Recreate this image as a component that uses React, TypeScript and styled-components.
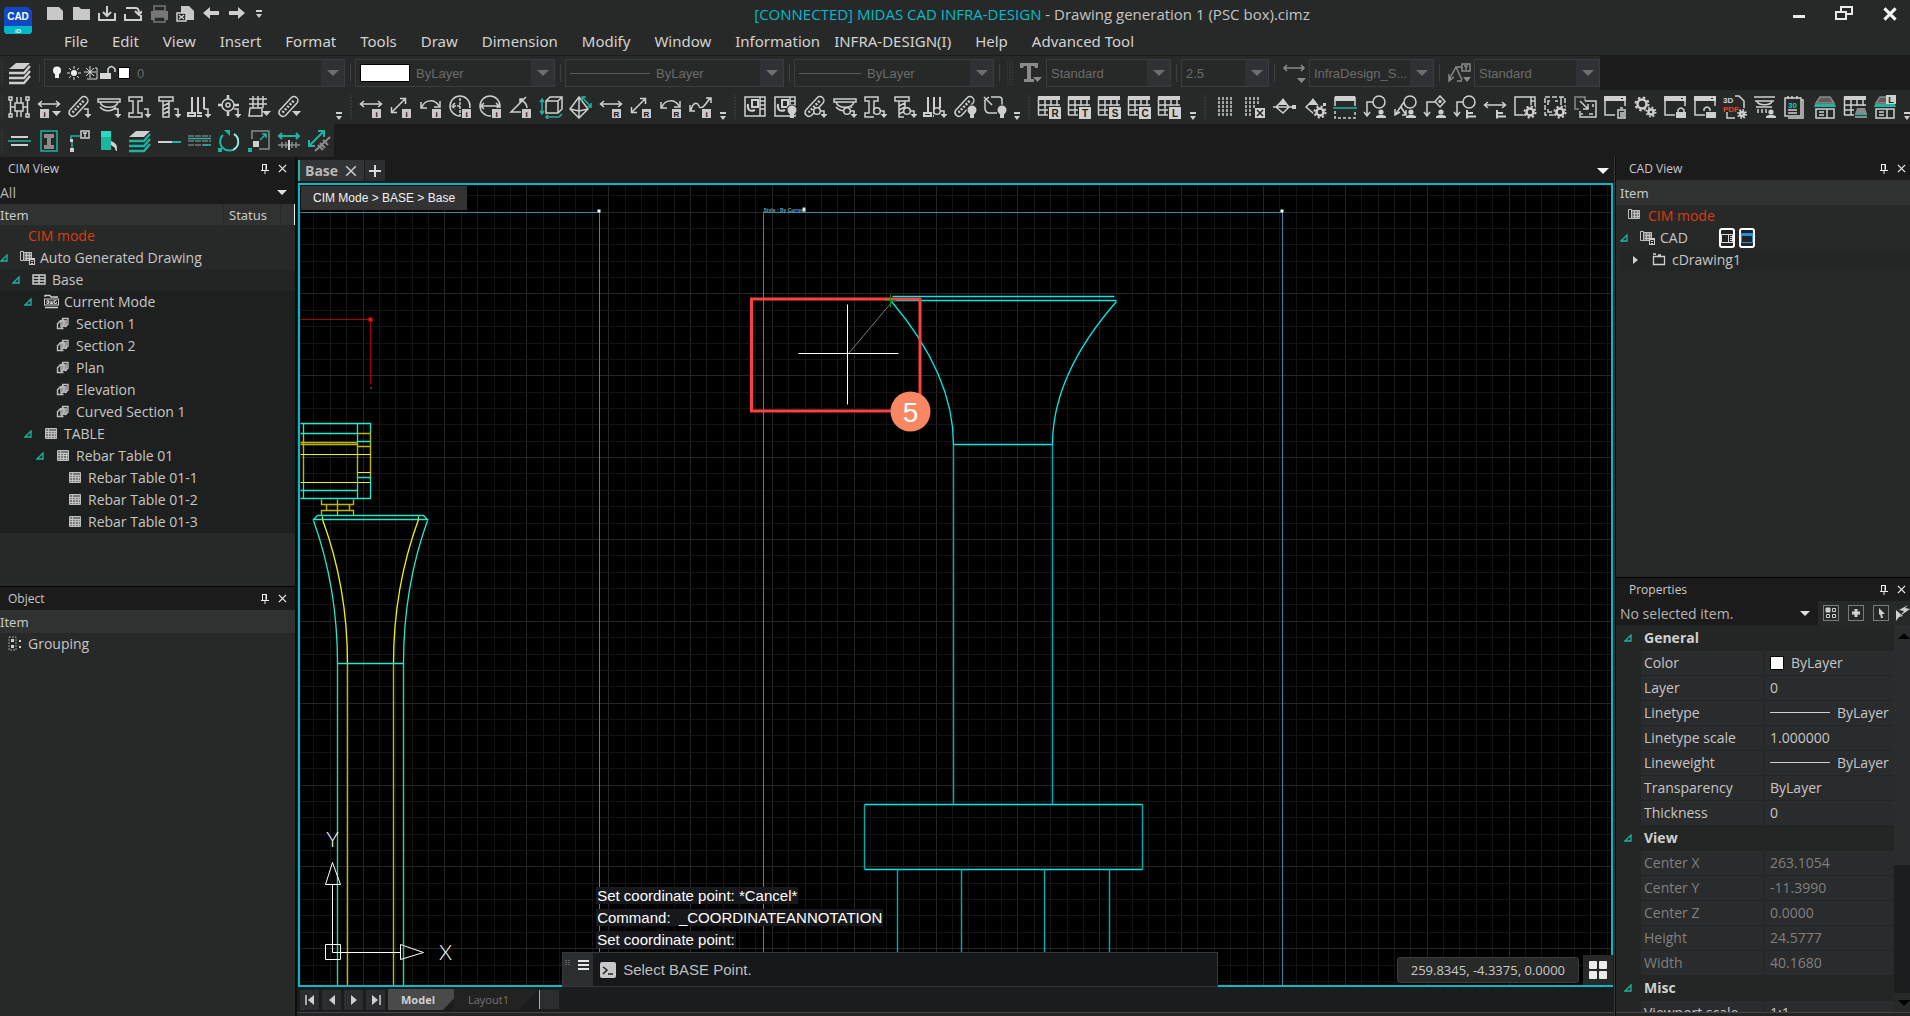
import React, { ReactNode } from "react";
import styled, { createGlobalStyle } from "styled-components";

const ui = '"Open Sans", "Noto Sans", sans-serif';
const serifI = '"Noto Sans", "Open Sans", sans-serif';
const arial = '"Liberation Sans", Arial, sans-serif';
const cyan = "#00bccb";
const teal = "#1db5a0";
const ink = "#cfcfcf";
const bar = "#272928";

const Global = createGlobalStyle`
  * { box-sizing: border-box; }
  body { margin: 0; background: #1b1b1b; color: #c8c8c8; font-family: ${ui}; font-size: 14px; overflow: hidden; }
  button, select, input { font: inherit; color: inherit; margin: 0; }
`;

/* ------------------------------------------------------------------ */
/* Layout                                                             */
/* ------------------------------------------------------------------ */

const Shell = styled.div`
  display: flex;
  flex-direction: column;
  height: 100vh;
  background: #1b1b1b;
`;

const Header = styled.header`
  display: grid;
  grid-template-columns: 40px 1fr;
  grid-template-rows: 27px 28px;
  background: ${bar};
  border-bottom: 1px solid #1c1c1c;
`;
const LogoCell = styled.div`
  grid-row: 1 / 3;
  padding: 7px 0 0 4px;
`;
const TitleRow = styled.div`
  display: flex;
  align-items: center;
`;
const QuickBar = styled.div`
  display: flex;
  align-items: center;
  padding-left: 2px;
`;
const Title = styled.h1`
  flex: 1;
  margin: 0;
  padding-left: 16px;
  text-align: center;
  font-weight: 400;
  font-size: 15px;
  line-height: 22px;
  color: #c4c4c4;
  white-space: nowrap;
  span { color: ${cyan}; }
`;
const WindowButtons = styled.div`
  display: flex;
`;
const Menu = styled.nav`
  display: flex;
  align-items: center;
  gap: 24px;
  padding-left: 24px;
  font-family: ${serifI};
`;
const MenuItem = styled.button<{ $tight?: boolean }>`
  border: 0;
  padding: 0;
  margin-left: ${(p) => (p.$tight ? -10 : 0)}px;
  background: none;
  font-size: 15px;
  line-height: 22px;
  color: #d2d2d2;
  white-space: nowrap;
`;
const IconButton = styled.button<{ $w?: number; $h?: number }>`
  display: flex;
  flex: none;
  align-items: center;
  justify-content: center;
  width: ${(p) => p.$w ?? 30}px;
  height: ${(p) => p.$h ?? 24}px;
  border: 0;
  padding: 0;
  background: none;
`;

const ToolRow = styled.div<{ $h: number; $fit?: boolean }>`
  display: flex;
  flex: none;
  align-items: center;
  height: ${(p) => p.$h}px;
  width: ${(p) => (p.$fit ? "max-content" : "auto")};
  background: ${bar};
  overflow: hidden;
`;
const ToolGroup = styled.div<{ $stretch?: number }>`
  display: flex;
  align-items: center;
  flex: none;
  min-width: ${(p) => p.$stretch ?? 0}px;
`;
const Grip = styled.i<{ $w?: number }>`
  flex: none;
  width: ${(p) => p.$w ?? 10}px;
  height: 24px;
  background: radial-gradient(circle, #5a5a5a 1px, transparent 1px) center / 3px 3px;
  background-clip: content-box;
  padding: 0 ${(p) => (p.$w === 4 ? 1 : 3)}px;
`;
const More = styled.button`
  display: flex;
  flex: none;
  align-items: flex-end;
  justify-content: center;
  width: 14px;
  height: 26px;
  margin-left: auto;
  border: 0;
  padding: 0;
  background: none;
`;
const Divider = styled.i`
  flex: none;
  width: 1px;
  height: 18px;
  margin: 0 4px 0 5px;
  background: #3e3f41;
`;

const ComboBox = styled.label<{ $w: number }>`
  display: flex;
  flex: none;
  align-items: center;
  width: ${(p) => p.$w}px;
  height: 28px;
  border: 1px solid #3c3c40;
  padding-left: 4px;
  color: #6b6b6b;
  font-family: ${arial};
`;
const ComboLead = styled.span`
  display: flex;
  flex: none;
  margin-right: 6px;
`;
const ComboSelect = styled.select`
  flex: 1;
  min-width: 0;
  height: 24px;
  appearance: none;
  border: 0;
  padding: 0;
  background: transparent;
  font-size: 13px;
`;
const ComboArrow = styled.span`
  display: flex;
  flex: none;
  align-items: center;
  justify-content: center;
  width: 23px;
  height: 26px;
  background: #303134;
`;
const Swatch = styled.i<{ $w: number; $h: number }>`
  flex: none;
  width: ${(p) => p.$w}px;
  height: ${(p) => p.$h}px;
  border: 1px solid #000;
  background: #fff;
`;
const Rule = styled.i<{ $w: number; $c: string }>`
  flex: none;
  width: ${(p) => p.$w}px;
  height: 1px;
  background: ${(p) => p.$c};
`;

const Body = styled.main`
  display: grid;
  grid-template-columns: 297px minmax(0, 1fr) 295px;
  flex: 1;
  min-height: 0;
`;
const Side = styled.aside<{ $right?: boolean }>`
  display: flex;
  flex-direction: column;
  min-height: 0;
  border-right: ${(p) => (p.$right ? "0" : "2px solid #0d0d0d")};
  border-left: ${(p) => (p.$right ? "1px solid #0d0d0d" : "0")};
  background: ${bar};
`;
const Panel = styled.section<{ $grow: number; $line?: boolean }>`
  display: flex;
  flex-direction: column;
  flex: ${(p) => p.$grow} 1 0;
  min-height: 0;
  overflow: hidden;
  border-top: ${(p) => (p.$line ? "1px solid #000" : "0")};
`;
const PanelTitle = styled.div<{ $inset?: boolean }>`
  display: flex;
  flex: none;
  align-items: center;
  height: 23px;
  padding-left: ${(p) => (p.$inset ? 13 : 8)}px;
  padding-right: ${(p) => (p.$inset ? 0 : 4)}px;
  background: #1b1b1c;
  h2 { flex: 1; margin: 0; font-size: 12px; font-weight: 400; line-height: 18px; }
`;
const FilterRow = styled.label<{ $inset?: boolean }>`
  display: flex;
  flex: 1;
  align-items: center;
  height: 24px;
  padding-left: ${(p) => (p.$inset ? 4 : 0)}px;
  background: #1b1b1c;
`;
const FilterBar = styled.div`
  display: flex;
  flex: none;
  height: 24px;
`;
const PlainSelect = styled.select`
  flex: 1;
  height: 24px;
  appearance: none;
  border: 0;
  padding: 0;
  background: transparent;
  color: #b4b4b4;
`;
const ColumnHead = styled.div<{ $inset?: boolean; $h?: number }>`
  display: flex;
  flex: none;
  align-items: center;
  height: ${(p) => p.$h ?? 23}px;
  padding-left: ${(p) => (p.$inset ? 4 : 0)}px;
  background: #303231;
  font-family: ${serifI};
  font-size: 13px;
  line-height: 20px;
`;
const HeadItem = styled.span`
  flex: 1;
`;
const HeadStatus = styled.span`
  width: 58px;
  padding-left: 5px;
  border-left: 1px solid #272928;
  border-right: 1px solid #272928;
`;
const HeadEnd = styled.span`
  align-self: stretch;
  width: 14px;
  border-right: 1px solid #f0f0f0;
`;

const Tree = styled.ul<{ $pad?: number }>`
  flex: none;
  list-style: none;
  margin: 0;
  padding: 0 0 0 ${(p) => p.$pad ?? 0}px;
`;
const TreeRow = styled.li<{ $depth: number; $bg?: string; $warn?: boolean }>`
  display: flex;
  align-items: center;
  height: 22px;
  padding-left: ${(p) => p.$depth * 12}px;
  background: ${(p) => p.$bg ?? "transparent"};
  color: ${(p) => (p.$warn ? "#dd3a10" : "#c6c6c6")};
  line-height: 22px;
  white-space: nowrap;
`;
const Twist = styled.span<{ $w: number }>`
  display: flex;
  flex: none;
  width: ${(p) => p.$w}px;
`;
const TreeIcon = styled.span`
  display: flex;
  flex: none;
  width: 20px;
`;
const TreeActions = styled.span`
  display: flex;
  gap: 4px;
  margin-left: 31px;
`;
const TinyButton = styled.button`
  display: flex;
  align-items: center;
  justify-content: center;
  width: 16px;
  height: 20px;
  border: 2px solid #fff;
  border-radius: 3px;
  padding: 0;
  background: #222;
`;

const Center = styled.section`
  display: flex;
  flex-direction: column;
  min-width: 0;
  border-right: 1px solid #3a3a3a;
  background: #1b1b1b;
`;
const TabStrip = styled.div`
  display: flex;
  flex: none;
  align-items: center;
  gap: 1px;
  height: 26px;
  padding: 3px 4px 2px 1px;
`;
const FileTab = styled.div`
  display: flex;
  align-items: center;
  height: 21px;
  border-left: 2px solid ${teal};
  padding-left: 5px;
  background: #333435;
`;
const FileName = styled.button`
  border: 0;
  padding: 0;
  background: none;
  color: #b8b8b8;
  font-weight: 700;
  line-height: 20px;
`;
const AddTab = styled(IconButton)`
  background: #2c2d2e;
`;
const Spacer = styled.span`
  flex: 1;
`;

const Canvas = styled.div`
  position: relative;
  flex: 1;
  min-height: 0;
  margin: 0 1px;
  border: 2px solid ${cyan};
  background: #000;
`;
const Drawing = styled.svg`
  display: block;
  width: 100%;
  height: 100%;
`;
const Crumb = styled.div`
  position: absolute;
  top: 1px;
  left: 1px;
  padding: 0 12px;
  background: #333;
  color: #f2f2f2;
  font-family: ${arial};
  font-size: 12px;
  line-height: 24px;
`;
const Console = styled.div`
  position: absolute;
  left: 20%;
  bottom: -2px;
  width: 50%;
`;
const Log = styled.div`
  display: flex;
  flex-direction: column;
  align-items: flex-start;
  gap: 5px;
  padding: 0 0 4px 34px;
  font-family: ${arial};
`;
const LogLine = styled.p`
  margin: 0;
  padding: 0 1px;
  background: #17181b;
  color: #fff;
  font-size: 15px;
  line-height: 17px;
  white-space: pre;
`;
const Prompt = styled.label`
  display: flex;
  align-items: stretch;
  height: 35px;
  border: 1px solid #36373b;
  background: #17181a;
`;
const PromptSide = styled.span`
  display: flex;
  align-items: flex-start;
  gap: 8px;
  width: 30px;
  padding: 7px 0 0 2px;
  background: #2c2d31;
`;
const PromptIcon = styled.span`
  display: flex;
  align-items: center;
  padding: 0 7px;
`;
const PromptInput = styled.input`
  flex: 1;
  min-width: 0;
  border: 0;
  padding: 0;
  background: transparent;
  color: #bfbfbf;
  font-family: ${arial};
  font-size: 15px;
  outline: 0;
`;
const Readout = styled.div`
  position: absolute;
  right: -2px;
  bottom: 0;
  display: flex;
  align-items: center;
  gap: 4px;
`;
const Coords = styled.output`
  border: 1px solid #3b3c3c;
  border-radius: 3px;
  padding: 0 13px;
  background: ${bar};
  color: #c8c8c8;
  font-size: 13px;
  line-height: 24px;
`;
const GridToggle = styled(IconButton)`
  background: ${bar};
`;

const SheetBar = styled.div`
  display: flex;
  flex: none;
  align-items: center;
  gap: 3px;
  height: 25px;
  padding-left: 3px;
  background: #1b1c1e;
`;
const SheetNav = styled(IconButton)`
  background: #2c2d31;
`;
const Sheet = styled.button<{ $on?: boolean }>`
  height: 21px;
  border: 0;
  padding: 0 ${(p) => (p.$on ? 28 : 30)}px 0 ${(p) => (p.$on ? 13 : 14)}px;
  margin-right: ${(p) => (p.$on ? -12 : -3)}px;
  background: ${(p) => (p.$on ? "#4a4a4a" : "#222")};
  clip-path: polygon(0 0, 100% 0, calc(100% - 20px) 100%, 0 100%);
  color: ${(p) => (p.$on ? "#d0d0d0" : "#757575")};
  font-size: 11px;
  font-weight: ${(p) => (p.$on ? 700 : 400)};
  line-height: 20px;
`;
const SheetHandle = styled.i`
  width: 20px;
  height: 19px;
  border-left: 1px solid #aaa;
  background: #2c2d31;
`;
const Foot = styled.div`
  flex: none;
  height: 4px;
  border-top: 1px solid #454545;
  background: #242424;
`;

const PropBody = styled.div`
  display: flex;
  flex: 1;
  min-height: 0;
`;
const PropScroll = styled.div`
  flex: 1;
  min-width: 0;
  overflow: hidden;
`;
const PropTable = styled.table`
  width: 100%;
  table-layout: fixed;
  border-collapse: collapse;
  background: #242625;
  line-height: 22px;
`;
const PropGroup = styled.th`
  height: 25px;
  padding: 0 0 0 8px;
  text-align: left;
  color: #d0d0d0;
  span { display: flex; align-items: center; gap: 12px; }
`;
const PropName = styled.th<{ $dim?: boolean }>`
  height: 25px;
  padding: 0 0 0 3px;
  border-top: 1px solid #232524;
  background: #2a2b2c;
  color: ${(p) => (p.$dim ? "#808080" : "#c6c6c6")};
  font-weight: 400;
  text-align: left;
`;
const PropValue = styled.td<{ $dim?: boolean }>`
  height: 25px;
  padding: 0 0 0 5px;
  border-top: 1px solid #232524;
  border-left: 2px solid #262827;
  background: #2a2b2c;
  color: ${(p) => (p.$dim ? "#808080" : "#c6c6c6")};
  span { display: flex; align-items: center; gap: 7px; }
  white-space: nowrap;
`;
const Gutter = styled.td`
  padding: 0;
`;
const ScrollTrack = styled.div`
  display: flex;
  flex-direction: column;
  align-items: flex-end;
  justify-content: space-between;
  width: 16px;
  padding: 8px 0 6px;
  background: linear-gradient(#2b2c2d 62%, #1c1d1e 62%, #1c1d1e 95%, #272928 95%);
`;

/* ------------------------------------------------------------------ */
/* Icons                                                              */
/* ------------------------------------------------------------------ */

type IcProps = { children: ReactNode; s?: number; c?: string };
const Ic = ({ children, s = 24, c = ink }: IcProps) => (
  <svg width={s} height={s} viewBox={`0 0 ${s} ${s}`} fill="none" stroke={c} strokeWidth={1.5} aria-hidden="true">
    {children}
  </svg>
);

const Turn = () => (
  <g>
    <path d="M17 14h4v7" />
    <path d="M17.500 19h7L21 23z" fill={ink} stroke="none" />
  </g>
);
const Tri = () => <path d="M15 16h9l-4.500 5z" fill={ink} stroke="none" />;
const Badge = ({ t, x = 13 }: { t: string; x?: number }) => (
  <g stroke="none">
    <rect x={x - 1} y="13" width="11" height="11" fill={bar} />
    <rect x={x} y="14" width="9" height="9" fill="#c8c8c8" />
    <text x={x + 4.5} y="21.500" textAnchor="middle" fontFamily="Liberation Sans" fontWeight="700" fontSize="8" fill="#111">{t}</text>
  </g>
);
const Node = () => (
  <g>
    <path d="M11 13h13v11H11z" fill={bar} stroke="none" />
    <circle cx="14" cy="16" r="3.300" />
    <path d="M17 16h4v4" />
    <path d="M17.500 19h7L21 23z" fill={ink} stroke="none" />
  </g>
);
const Bulb = () => (
  <g stroke="none">
    <circle cx="19" cy="15" r="5.500" fill={bar} />
    <circle cx="19" cy="15" r="4.500" fill={ink} />
    <rect x="17" y="19" width="4" height="4" fill={ink} />
  </g>
);
const HArrow = () => <path d="M1 9H23M5 6L1.500 9 5 12M19 6l3.500 3L19 12" />;
const Diag = () => <path d="M3 17L16 4M11 3.500h5.500V9M2.500 12v5.500H8" />;
const Arc = () => <path d="M3 12C6 4 16 4 20 11M2 7v6h6M21 6v6h-6" />;
const Pill = () => (
  <g>
    <path d="M2.500 15.500L14 3a3.800 3.800 0 0 1 6 5L8.500 20.500A4 4 0 0 1 2.500 15.500z" />
    <path d="M5.500 17.500L17 5.500" strokeWidth="2.500" strokeDasharray="2 1.500" />
  </g>
);
const Beam = () => <path d="M1 4h22v3H1zM3 7c2 7 16 7 18 0M3 12c4 5 12 5 16 0" />;
const IBeam = () => <path d="M2 2h13v4h-4v12h4v4H2v-4h4V6H2z" />;
const Bolt = () => <path d="M2 2h14v4H2zM6 6v16h6V6M6 11l6-3M6 15l6-3M6 19l6-3" />;
const Rods = () => <path d="M5 2v16M11 2v16M17 2v12M1 18h7v3H1zM10 18h5M10 21h5" strokeWidth="2" />;
const Gear = ({ x = 17, y = 17, r = 4 }: { x?: number; y?: number; r?: number }) => (
  <g>
    <circle cx={x} cy={y} r={r + 3} fill={bar} stroke="none" />
    <circle cx={x} cy={y} r={r + 1.5} strokeWidth="2" strokeDasharray={`${(r + 1.5) * 0.393} ${(r + 1.5) * 0.393}`} />
    <circle cx={x} cy={y} r={r - 0.5} strokeWidth="2.500" />
  </g>
);
const Win = () => (
  <g>
    <path d="M2 2h20v18H2z" />
    <path d="M1 1h22v5H1z" fill={ink} stroke="none" />
    <path d="M18 3h2v1h-2z" fill="#222" stroke="none" />
    <rect x="12" y="11" width="12" height="13" fill={bar} stroke="none" />
  </g>
);
const Person = () => (
  <g stroke="none">
    <circle cx="18" cy="17" r="2.600" fill={ink} />
    <path d="M13 23v-1.500q1-1.500 3-1.500h4q2 0 3 1.500V23z" fill={ink} />
  </g>
);
const Align = () => <path d="M14 15v8.500M15 18h5M15 21.500h8" strokeWidth="2" />;
const GridT = () => (
  <g>
    <path d="M1.500 2v18M8 2v18M14 2v11M20 2v11M1 10h22M1 15h12M1 20h12" />
    <path d="M1 1h22v4H1z" fill={ink} stroke="none" />
  </g>
);
const House = () => (
  <g>
    <path d="M7 2h10l4 6H3z" fill="#5c5c5c" stroke="#8b8b8b" />
    <path d="M2 9h20l1 3H1z" fill={teal} stroke="none" />
    <path d="M3 14h18v9H3zM14 14v9M6 17h5M6 20h5" />
  </g>
);

const net = (
  <path d="M2 2h3v3H2zM19 2h3v3h-3zM2 19h3v3H2zM19 19h3v3h-3zM8 8h8v8H8zM3.500 5v14M20.500 5v14M3.500 12H8M16 12h4.500M10 2v6M14 2v6M10 16v6M14 16v6" />
);
const panelIcon = (
  <g>
    <path d="M2 2h20v19H2zM17 2v19M17 6h5M17 10h5M17 14h5" />
    <path d="M9 5h6v7H9zM5 9c-1 6 2 8 7 6" strokeWidth="2" />
  </g>
);

const groups: { w?: number; icons: [string, ReactNode][] }[] = [
  {
    w: 342,
    icons: [
      ["Network", net],
      ["Dimension info", <><HArrow /><Badge t="i" x={3} /><Tri /></>],
      ["Rebar", <><Pill /><Turn /></>],
      ["Girder", <><Beam /><Turn /></>],
      ["Section", <><IBeam /><Turn /></>],
      ["Pile", <><Bolt /><Turn /></>],
      ["Rods", <><Rods /><Turn /></>],
      ["Target", <><circle cx="11" cy="10" r="6" /><circle cx="11" cy="10" r="2" /><path d="M11 0v4M11 16v5M1 10h4M17 10h5" strokeWidth="2.500" /><Turn /></>],
      ["Mesh", <><path d="M6 1v12M11 1v12M16 1v12M2 4h18M2 9h18M3 13h12v8H2z" /><Tri /></>],
      ["Rebar list", <><Pill /><Tri /></>],
    ],
  },
  {
    icons: [
      ["Linear dimension", <><HArrow /><Badge t="i" /></>],
      ["Aligned dimension", <><Diag /><Badge t="i" /></>],
      ["Arc dimension", <><Arc /><Badge t="i" /></>],
      ["Radius", <><circle cx="11" cy="11" r="10" /><path d="M11 11H3M6 8l-3 3 3 3M11 3v17" strokeDasharray="3 1" /><Badge t="i" /></>],
      ["Diameter", <><circle cx="11" cy="11" r="10" /><path d="M2 11h18M5 8l-3 3 3 3M17 8l3 3-3 3" /><Badge t="i" /></>],
      ["Angle", <><path d="M17 2L2 17h12M12 5c4 2 6 5 6 8M14 4h-3v4" /><Badge t="i" /></>],
      ["Box dimension", <><path d="M7 6l4-4h12v12l-4 4H7zM7 6h12v12M19 6l4-4" /><path d="M3 5v13M1 7l2-3 2 3M1 16l2 3 2-3M7 22h13M9 20l-2 2 2 2M20 22l3-3" stroke={teal} /></>],
      ["Pyramid dimension", <><path d="M10 2L1 14l9 9 9-9zM10 2v21M1 14l9 2 9-2" /><path d="M13 2l9 10M13 6V2h4M22 8v4h-4" stroke={teal} /></>],
      ["Linear reference", <><HArrow /><Badge t="R" /></>],
      ["Aligned reference", <><Diag /><Badge t="R" /></>],
      ["Arc reference", <><Arc /><Badge t="R" /></>],
      ["Spline", <><path d="M2 15c2-8 6-8 8-4s5 1 11-8M17 3h5v5M1 10v6h5" /><Badge t="i" /></>],
    ],
  },
  {
    icons: [
      ["View panel", panelIcon],
      ["View panel tips", <>{panelIcon}<Bulb /></>],
      ["Rebar node", <><Pill /><Node /></>],
      ["Girder node", <><Beam /><Node /></>],
      ["Section node", <><IBeam /><Node /></>],
      ["Pile node", <><Bolt /><Node /></>],
      ["Rods node", <><Rods /><Node /></>],
      ["Rebar tips", <><Pill /><Bulb /></>],
      ["Shape tips", <><path d="M8 2h8q3 0 3 3v6M14 18H6q-3 0-4-4V6M1 2l8 8M1 6l5-4" /><Bulb /></>],
    ],
  },
  {
    w: 166,
    icons: ["R", "T", "S", "C", "L"].map((t): [string, ReactNode] => [
      `Table ${t}`,
      <><GridT /><rect x="11" y="11" width="13" height="13" fill={bar} stroke="none" /><rect x="12" y="12" width="12" height="12" fill={ink} stroke="none" /><text x="18" y="21.500" textAnchor="middle" fontFamily="Liberation Sans" fontWeight="700" fontSize="10" fill="#222" stroke="none">{t}</text></>,
    ]),
  },
  {
    icons: [
      ["Columns", <path d="M6 2v20M10 2v20M14 2v20M18 2v20" strokeDasharray="3 1" />],
      ["Columns off", <><path d="M3 2v20M7 2v20M11 2v11M15 2v8" strokeDasharray="3 1" /><rect x="12" y="13" width="10" height="10" fill={ink} stroke="none" /><path d="M14 15l6 6M20 15l-6 6" stroke="#222" /></>],
      ["Level mark", <><path d="M3 12l7-7 6 7-6 6zM0 12h23" /><path d="M5 10l5-7 5 7zM19 10h4v4h-4z" fill={ink} stroke="none" /></>],
      ["Level settings", <><path d="M3 12l7-7 6 7-6 6z" /><path d="M5 10l5-7 5 7zM20 8h3v3h-3z" fill={ink} stroke="none" /><Gear /></>],
      ["Split", <><path d="M2 1h20v5H2z" fill={ink} stroke="none" /><path d="M2 2v9M22 2v9" /><path d="M0 13h24" stroke={teal} /><path d="M2 16v7h20v-7" strokeDasharray="3 2" /></>],
      ["Leader user", <><circle cx="16" cy="7" r="6" /><path d="M10 7H4v13M1 17l3 4 3-4" /><Person /></>],
      ["Leader multi", <><circle cx="17" cy="7" r="6" /><path d="M11 7L2 20M2 14v6l5-3M8 12l5 8M9 20h4v-5" /><Person /></>],
      ["Leader diamond", <><path d="M17 1l5 5.500-5 5.500-5-5.500zM12 7H4v13M1 17l3 4 3-4" /><circle cx="17" cy="6.500" r="1" /><Person /></>],
      ["Leader align", <><circle cx="16" cy="7" r="6" /><path d="M10 7H4v13M1 17l3 4 3-4" /><Align /></>],
      ["Dimension align", <><path d="M2 10h20M5 7l-3.500 3L5 13M19 7l3.500 3L19 13" /><Align /></>],
      ["View settings", <><path d="M2 2h20v18H2zM18 2v8M18 6h4" /><Gear /></>],
      ["Frame settings", <><path d="M2 2h20v18H2z" strokeDasharray="5 2" /><path d="M18 2v8M7 6H5v4M5 14v3h4M12 6h3" /><Gear /></>],
      ["Scale view", <><path d="M12 6V2H2v12h4" stroke="#888" /><path d="M12 6h11v16H7v-6M7 6l8 8M15 9v5h-5M10 19H8M20 9v3M20 19h-4" /></>],
      ["Delete view", <><Win /><path d="M14 15h9M17 13h3M15 16v7h7v-7M18 17v5M20 17v5" /></>],
      ["System", <><Gear x={9} y={9} r={5} /><Gear x={18} y={17} r={3} /></>],
      ["Lock view", <><Win /><path d="M13 17h10v6H13z" fill={ink} stroke="none" /><path d="M15 17v-2q3-4 6 0v2" /></>],
      ["Unlock view", <><Win /><path d="M13 17h10v6H13z" fill={ink} stroke="none" /><path d="M11 16v-2q3-4 6 0v2" /></>],
      ["3D PDF", <><path d="M12 1h4l5 5v7M4 17v6h8" /><text x="0" y="8" fontFamily="Liberation Sans" fontWeight="700" fontSize="8" fill={ink} stroke="none">3D</text><text x="0" y="17" fontFamily="Liberation Sans" fontWeight="700" fontSize="8" fill="#f04428" stroke="none">PDF</text><Gear x={19} y={19} r={2.5} /></>],
      ["Deck", <><path d="M1 2h21M2 6h19M4 6c1 5 14 5 15 0M3 12h16M5 14v4M9 14v4M13 14v4" /><Person /></>],
      ["3D notes", <><path d="M2 3h16v18H2zM18 5h2v18H5M5 1v3M9 1v3M14 1v3M5 15h9M5 18h9" /><text x="5" y="13" fontFamily="Liberation Sans" fontWeight="700" fontSize="8" fill="#10d0b8" stroke="none">30</text></>],
      ["Bridge model", <House />],
      ["Bridge table", <><GridT /><rect x="11" y="11" width="13" height="13" fill={bar} stroke="none" /><path d="M14 13h8l2 6H12zM12 21h12v2H12z" fill="#8b8b8b" stroke="none" /><path d="M12 19.500h12" stroke={teal} /></>],
      ["Bridge layer", <><House /><rect x="13" y="0" width="10" height="9" fill={ink} stroke="none" /><text x="18" y="8" textAnchor="middle" fontFamily="Liberation Sans" fontWeight="700" fontSize="9" fill="#222" stroke="none">L</text></>],
    ],
  },
];

const Layers = ({ c }: { c: string }) => (
  <>
    <path d="M9 2h14l-6 6H2z" fill={ink} stroke="none" />
    <path d="M2 12h15l6-7M2 17h15l6-7M2 22h15l6-7" stroke={c} strokeWidth="2.300" />
  </>
);

const drawTools: [string, ReactNode][] = [
  ["Line pair", <><path d="M4 8h17M4 16h17" strokeWidth="2" /><path d="M1 12h23" stroke={teal} /></>],
  ["Section type", <><path d="M4 2h16v20H4z" stroke={teal} /><path d="M7 5h10v4h-3v7h3v4H7v-4h3V9H7z" fill="#8b8b8b" stroke="none" /></>],
  ["Text leader", <><path d="M4 11V7h9M5 13v7" stroke={teal} /><path d="M14 2h8v7h-8zM16 4h4M18 4v4" /><path d="M3 10h3v3H3zM3 19h4v4H3z" fill={ink} stroke="none" /></>],
  ["Block", <><path d="M4 2h10v19H4z" fill={teal} stroke="none" /><path d="M4 2h10v6H4z" fill="#28dcc2" stroke="none" /><path d="M14 12q7 2 6 10-2 0-2-3l-4-3z" fill={ink} stroke="none" /></>],
  ["Layer stack", <Layers c={teal} />],
  ["Line split", <><path d="M1 13h14" strokeWidth="2" /><path d="M15 13h9" stroke={teal} strokeWidth="2" /></>],
  ["Hatch lines", <><path d="M1 7h23M1 12h23M1 16h23" stroke="#777" strokeDasharray="6 1" /><path d="M1 9.500h23M16 16h8" stroke={teal} /></>],
  ["Rotate", <><path d="M6 6a9 9 0 1 0 11-1" stroke={teal} strokeWidth="2" /><path d="M17 5a9 9 0 0 1-1 16" stroke="#b0e8e0" /><path d="M7 1h6v6zM1 19h4v4H1z" fill={teal} stroke="none" /></>],
  ["Scale", <><path d="M5 10V2h17v18H12" stroke="#8b8b8b" /><path d="M13 11l6-6M15 5h4v4" stroke={teal} /><path d="M6 12h6v6H6z" fill={ink} stroke="none" /><path d="M1 19h4v4H1z" fill={teal} stroke="none" /></>],
  ["Stretch", <><path d="M1 7h22M5 4L2 7l3 3M19 4l3 3-3 3" stroke={teal} strokeWidth="2" /><path d="M1 16h22M5 13v6M9 13v6M15 13v6M19 13v6" stroke="#8b8b8b" /><path d="M12 11v10" strokeWidth="2" /></>],
  ["Stretch aligned", <><path d="M2 17L17 2M11 2h6v6M2 11v6h6" stroke={teal} strokeWidth="2" /><path d="M8 22L23 8M11 16l5 5M16 11l5 5M13 14l5 5" stroke="#8b8b8b" strokeWidth="2" /></>],
];

const quick: [string, ReactNode][] = [
  ["New", <path d="M1 2h12l4 4v9H1z" fill="#c8c8c8" stroke="none" />],
  ["Open", <path d="M1 2h6l2 2h10v11H1z" fill="#c8c8c8" stroke="none" />],
  ["Save", <path d="M1 8v7h16V8M9 1v10M5 7l4 4 4-4" strokeWidth="2" />],
  ["Export", <path d="M1 9v6h16v-5M2 3h10q3 0 3 6M11 6l4 4 3-4" strokeWidth="2" />],
  ["Print", <><path d="M4 1h11v5H4z" stroke="#777" /><path d="M1 6h17v9H1z" fill="#777" stroke="none" /><path d="M4 12h11v5H4z" fill={bar} stroke="#777" /></>],
  ["Close file", <><path d="M5 1h8l5 5v9H5z" fill="#c8c8c8" stroke="none" /><path d="M1 8h9v8H1z" fill={bar} /><path d="M3 10l5 4M8 10l-5 4" /></>],
  ["Undo", <path d="M1 8l7-6v4h9v4H8v4z" fill={ink} stroke="none" />],
  ["Redo", <path d="M17 8l-7-6v4H1v4h9v4z" fill={ink} stroke="none" />],
];

const MoreMark = () => (
  <svg width="6" height="8" viewBox="0 0 6 8" aria-hidden="true">
    <path d="M0 0h6v2H0zM0 4h6L3 8z" fill={ink} />
  </svg>
);
const Down = ({ w, c }: { w: number; c: string }) => (
  <svg width={w} height={w / 2} viewBox="0 0 12 6" aria-hidden="true">
    <path d="M0 0h12L6 6z" fill={c} />
  </svg>
);
const Pin = () => (
  <svg width="8" height="10" viewBox="0 0 8 10" fill="none" stroke="#f0f0f0" aria-hidden="true">
    <path d="M1.500 .5h4v5M1.500 0v6M5 0v6" />
    <path d="M0 6.500h8M4 7v3" />
  </svg>
);
const Cross = ({ s = 10, c = "#f0f0f0", w = 1.3 }: { s?: number; c?: string; w?: number }) => (
  <svg width={s} height={s} viewBox="0 0 10 10" stroke={c} strokeWidth={w} aria-hidden="true">
    <path d="M1 1l8 8M9 1L1 9" />
  </svg>
);
const Open = () => (
  <svg width="8" height="8" viewBox="0 0 8 8" fill="none" stroke={teal} strokeWidth="1.300" aria-hidden="true">
    <path d="M7 1v6H1z" />
  </svg>
);
const LayerStates = () => (
  <svg width="82" height="16" viewBox="0 0 82 16" fill="none" stroke="#d8d8d8" aria-hidden="true">
    <circle cx="8" cy="5.500" r="4" fill="#f0f0f0" stroke="none" />
    <path d="M6 9h4v4H6z" fill="#f0f0f0" stroke="none" />
    <circle cx="25" cy="8" r="3" fill="#f0f0f0" stroke="none" />
    <path d="M25 1v3M25 12v3M18 8h3M29 8h3M20 3l2 2M28 11l2 2M30 3l-2 2M22 11l-2 2" />
    <path d="M41 1v12M35 7h12M37 3l8 8M45 3l-8 8M46 3h2v11H38" />
    <path d="M51 8h11v6H51z" fill="#d8d8d8" stroke="none" />
    <path d="M59 8V4q3-5 7 0v3" strokeWidth="1.500" />
    <path d="M69.500 2.500h11v11h-11z" fill="#fff" stroke="#000" />
  </svg>
);

/* ------------------------------------------------------------------ */
/* Tree and property data                                             */
/* ------------------------------------------------------------------ */

const Tab = () => (
  <Ic s={16} c="#c0c0c0">
    <path d="M2 3h11v9H2z" fill="#777" stroke="none" />
    <path d="M1.500 2.500h11v10h-11zM1.500 5.500h11M1.500 7.500h11M1.500 10.500h11M4.500 3v10M7.500 5v7M10.500 5v7" strokeWidth="1" />
  </Ic>
);
const Sheets = ({ t }: { t?: boolean }) => (
  <Ic s={16} c="#c0c0c0">
    <path d="M4 2h8v8H4z" fill="#777" stroke="none" />
    <path d="M.5 1.500h3v9h-3zM3.500 2.500h8v8h-8zM5 5.500h6M5 8.500h6M6.500 3v7M9.500 3v7" strokeWidth="1" />
    {t && <><rect x="9" y="8" width="6" height="7" fill="#ccc" stroke="none" /><path d="M10.500 14v-3.500h3V14M10.500 12.500h3" stroke="#222" strokeWidth="1" /></>}
  </Ic>
);
const BaseI = () => <Ic s={16}><path d="M1 3h12v9H1zM1 6h12M1 9h12M7 3v9" strokeWidth="1.400" /></Ic>;
const Dwg = () => (
  <Ic s={16}>
    <path d="M1 3V1.500h5l1 1.500h7M1 13.500h13" strokeWidth="1.300" />
    <rect x="0.500" y="5" width="14" height="6" strokeWidth="1" />
    <path d="M3 6.500v3h1.500v-3zM6 6.500V9.500h3V6.500M7.500 7v3M12.500 6.500h-2v3h2V8" strokeWidth="1" />
  </Ic>
);
const View = () => (
  <Ic s={16} c="#bdbdbd">
    <path d="M4 4h7v7H4z" fill="#999" stroke="none" />
    <path d="M6 2.500h6v6M1.500 7v5.500h6M1.500 8L4 5h4v4l-3 3M12 8l-3 3M5 5l3-2.500" strokeWidth="1.400" />
  </Ic>
);
const FolderI = () => <Ic s={16}><path d="M1.500 4.500h11v8h-11zM1 2h3M6 3h3" strokeWidth="1.300" /></Ic>;

type Row = { d: number; t: string; i?: ReactNode; open?: boolean; bg?: string };
const dark = "#1e201f";
const rows: Row[] = [
  { d: 0, t: "Auto Generated Drawing", i: <Sheets t />, open: true },
  { d: 1, t: "Base", i: <BaseI />, open: true, bg: "#232524" },
  { d: 2, t: "Current Mode", i: <Dwg />, open: true, bg: dark },
  ...["Section 1", "Section 2", "Plan", "Elevation", "Curved Section 1"].map((t): Row => ({ d: 3, t, i: <View />, bg: dark })),
  { d: 2, t: "TABLE", i: <Tab />, open: true, bg: dark },
  { d: 3, t: "Rebar Table 01", i: <Tab />, open: true, bg: dark },
  ...["Rebar Table 01-1", "Rebar Table 01-2", "Rebar Table 01-3"].map((t): Row => ({ d: 4, t, i: <Tab />, bg: dark })),
];

type Prop = [string, ReactNode];
const line = <Rule $w={60} $c="#d0d0d0" />;
const general: Prop[] = [
  ["Color", <span><Swatch $w={14} $h={14} />ByLayer</span>],
  ["Layer", "0"],
  ["Linetype", <span>{line}ByLayer</span>],
  ["Linetype scale", "1.000000"],
  ["Lineweight", <span>{line}ByLayer</span>],
  ["Transparency", "ByLayer"],
  ["Thickness", "0"],
];
const view: Prop[] = [
  ["Center X", "263.1054"],
  ["Center Y", "-11.3990"],
  ["Center Z", "0.0000"],
  ["Height", "24.5777"],
  ["Width", "40.1680"],
];

const PropRows = ({ title, items, dim }: { title: string; items: Prop[]; dim?: boolean }) => (
  <tbody>
    <tr><PropGroup colSpan={3} scope="rowgroup"><span><Open />{title}</span></PropGroup></tr>
    {items.map(([n, v]) => (
      <tr key={n}>
        <Gutter />
        <PropName scope="row" $dim={dim}>{n}</PropName>
        <PropValue $dim={dim}>{v}</PropValue>
      </tr>
    ))}
  </tbody>
);

const PanelHead = ({ title, inset }: { title: string; inset?: boolean }) => (
  <PanelTitle $inset={inset}>
    <h2>{title}</h2>
    <IconButton $w={16} $h={20} aria-label={`Pin ${title}`}><Pin /></IconButton>
    <IconButton $w={18} $h={20} aria-label={`Close ${title}`}><Cross s={9} /></IconButton>
  </PanelTitle>
);

const Combo = ({ w, label, value, lead }: { w: number; label: string; value: string; lead?: ReactNode }) => (
  <ComboBox $w={w}>
    {lead && <ComboLead>{lead}</ComboLead>}
    <ComboSelect aria-label={label} defaultValue={value}><option>{value}</option></ComboSelect>
    <ComboArrow><Down w={12} c="#6e6e6e" /></ComboArrow>
  </ComboBox>
);

/* ------------------------------------------------------------------ */
/* Model space                                                        */
/* ------------------------------------------------------------------ */

/* World coordinates of the visible corner of the model space. */
const ORIGIN = { x: 300, y: 185 };
const STEP = 16.37;

const GridLines = () => {
  const out: ReactNode[] = [];
  for (let i = -4; i < 180; i++) {
    const x = Math.round(362.6 + i * STEP);
    out.push(<path key={`v${i}`} d={`M${x} 185V1400`} stroke={i % 5 === 0 ? "#262626" : "#141414"} />);
  }
  for (let i = -6; i < 90; i++) {
    const y = Math.round(293.4 + i * STEP);
    out.push(<path key={`h${i}`} d={`M300 ${y}H3200`} stroke={i % 5 === 0 ? "#262626" : "#141414"} />);
  }
  return <g>{out}</g>;
};

const Model = () => (
  <Drawing aria-label="Model space">
    <g transform={`translate(${0.5 - ORIGIN.x} ${0.5 - ORIGIN.y})`} fill="none">
      <GridLines />
      <g stroke="#4585a3">
        <path d="M300 212H599V1400M763 1400V212H1282V1400" />
      </g>
      <path d="M597 209h3v3h-3zM1280 209h3v3h-3z" fill="#fff" />
      <text x="763" y="211" fontFamily="Liberation Sans" fontSize="5" fontWeight="700" fill="#5aa6c4">Style : By Current</text>
      <path d="M802 207h3v4h-3z" fill="#c8f0d8" />

      <path d="M300 319H370V384" stroke="#a80000" />
      <path d="M368 317h4v4h-4z" fill="#f01010" />
      <path d="M370 387h1v1h-1z" fill="#fff" />

      <g stroke="#c0b800" strokeWidth="1.400">
        <path d="M300 442H357M300 444H357M357 433H370M357 446H370M303 433V482M357 442V477M370 433V477" />
        <path d="M321 499V504H353V499M326 504V510H349V504M321 515V510H353V515M337 499V515" />
        <path d="M347 663V1400M393 663V1400" />
      </g>
      <g stroke="#f4f400">
        <path d="M300 454H370M300 482H370M357 472H370" />
        <path d="M322 516V519Q347 587 347 663M418 516V519Q393 587 393 663" strokeWidth="1.300" />
      </g>
      <g stroke="#22e8cc" strokeWidth="1.300">
        <path d="M300 423H370V433M300 433H357M303 423V433M357 423V442M357 441H370M357 477H370V498H300M357 477V498M303 482V498M300 490H357" />
        <path d="M317 515H423L427 519H313Z" />
        <path d="M313 520Q337 587 337 663H403Q403 587 427 520" />
      </g>
      <path d="M337 663V1400M403 663V1400" stroke="#24d8a0" strokeWidth="1.400" />

      <g stroke="#00e8e8" strokeWidth="1.300">
        <path d="M892 296H1114M890 300H1116" />
        <path d="M891 301Q953 374 953 444H1052Q1052 374 1116 301" />
        <path d="M864 804H1142M864 869H1142" />
      </g>
      <path d="M953 444V804M1052 444V804M864 804V869M1142 804V869M897 869V1400M961 869V1400M1044 869V1400M1109 869V1400" stroke="#00aeae" strokeWidth="1.400" />

      <g stroke="#fff">
        <path d="M325 944h15v15h-15zM332 952V884M325 884h15L332 862zM332 952H400M400 944v15L423 952z" />
      </g>
      <g fill="#fff" fontFamily="Lato" fontWeight="300" fontSize="21">
        <text x="332" y="846" textAnchor="middle">Y</text>
        <text x="445" y="959" textAnchor="middle">X</text>
      </g>

      <path d="M848 353L891 302" stroke="#787878" />
      <path d="M847 304V404M798 353H898" stroke="#fff" />
      <path d="M751 298.500H919.500V410.500H751z" stroke="#fb4040" strokeWidth="3" />
      <path d="M890 294V307M884 300H896" stroke="#0a8a0a" />
      <circle cx="910" cy="411" r="20" fill="#f88762" />
      <text x="910" y="421" textAnchor="middle" fontFamily="Liberation Sans" fontSize="28" fill="#fff">5</text>
    </g>
  </Drawing>
);

/* ------------------------------------------------------------------ */

const menus = ["File", "Edit", "View", "Insert", "Format", "Tools", "Draw", "Dimension", "Modify", "Window", "Information", "INFRA-DESIGN(I)", "Help", "Advanced Tool"];

export default function App() {
  return (
    <Shell>
      <Global />
      <Header>
        <LogoCell>
          <svg width="28" height="27" viewBox="0 0 28 27" role="img" aria-label="CAD iD">
            <path d="M2 0h22l4 4v15H0V2z" fill="#1048c4" />
            <path d="M0 19h28v6l-2 2H2l-2-2z" fill="#00b8c8" />
            <text x="14" y="13" textAnchor="middle" fontFamily="Liberation Sans" fontWeight="700" fontSize="10" fill="#fff">CAD</text>
            <text x="14" y="26" textAnchor="middle" fontFamily="Liberation Sans" fontWeight="700" fontSize="6" fill="#d8ffff">iD</text>
          </svg>
        </LogoCell>
        <TitleRow>
          <QuickBar>
            {quick.map(([n, g]) => (
              <IconButton key={n} $w={26} aria-label={n}><Ic s={18}>{g}</Ic></IconButton>
            ))}
            <IconButton $w={18} aria-label="More commands"><MoreMark /></IconButton>
          </QuickBar>
          <Title><span>[CONNECTED] MIDAS CAD INFRA-DESIGN</span> - Drawing generation 1 (PSC box).cimz</Title>
          <WindowButtons>
            <IconButton $w={38} aria-label="Minimize"><Ic s={18}><path d="M3 10h12v3H3z" fill="#e8e8e8" stroke="none" /></Ic></IconButton>
            <IconButton $w={52} aria-label="Restore"><Ic s={18} c="#e8e8e8"><path d="M1 7h10v7H1zM6 6V2h11v7h-5" strokeWidth="2" /></Ic></IconButton>
            <IconButton $w={40} aria-label="Close"><Cross s={14} c="#f4f4f4" w={2.2} /></IconButton>
          </WindowButtons>
        </TitleRow>
        <Menu>
          {menus.map((m) => <MenuItem key={m} $tight={m.startsWith("INFRA")}>{m}</MenuItem>)}
        </Menu>
      </Header>

      <ToolRow $h={34} $fit>
        <Grip $w={4} />
        <IconButton aria-label="Layers"><Ic><Layers c={ink} /></Ic></IconButton>
        <Divider />
        <Combo w={301} label="Layer" value="0" lead={<LayerStates />} />
        <Divider />
        <Combo w={200} label="Color" value="ByLayer" lead={<Swatch $w={50} $h={18} />} />
        <Divider />
        <Combo w={219} label="Linetype" value="ByLayer" lead={<Rule $w={80} $c="#5a5a5a" />} />
        <Divider />
        <Combo w={200} label="Lineweight" value="ByLayer" lead={<Rule $w={62} $c="#5a5a5a" />} />
        <Divider />
        <Grip $w={12} />
        <IconButton aria-label="Text style">
          <Ic c="#8a8a8a"><path d="M1 2h18v5h-3l-1-2h-3v13h3v3H5v-3h3V5H5L4 7H1z" fill="#8a8a8a" stroke="none" /><path d="M14 16h9l-4.500 5z" fill="#8a8a8a" stroke="none" /></Ic>
        </IconButton>
        <Combo w={125} label="Text style" value="Standard" />
        <Divider />
        <Combo w={88} label="Text height" value="2.5" />
        <Divider />
        <IconButton aria-label="Dimension style">
          <Ic c="#8a8a8a"><path d="M2 7h20M5 4L2 7l3 3M19 4l3 3-3 3" /><path d="M15 17h9l-4.500 5z" fill="#8a8a8a" stroke="none" /></Ic>
        </IconButton>
        <Combo w={125} label="Dimension style" value="InfraDesign_S..." />
        <Divider />
        <IconButton aria-label="Leader style">
          <Ic c="#8a8a8a"><path d="M15 3h8v7h-8zM17 5h4M19 5v4M15 6H9L2 19M2 13v7l5-4M9 6l6 13M10 20h5" /><path d="M16 16h8l-4 5z" fill="#8a8a8a" stroke="none" /></Ic>
        </IconButton>
        <Combo w={126} label="Leader style" value="Standard" />
      </ToolRow>

      <ToolRow $h={34}>
        {groups.map((g, i) => (
          <React.Fragment key={i}>
            <Grip $w={i === 0 ? 4 : 10} />
            <ToolGroup $stretch={g.w}>
              {g.icons.map(([n, art]) => (
                <IconButton key={n} aria-label={n}><Ic>{art}</Ic></IconButton>
              ))}
              <More aria-label="More tools"><MoreMark /></More>
            </ToolGroup>
          </React.Fragment>
        ))}
      </ToolRow>

      <ToolRow $h={33} $fit>
        <Grip $w={4} />
        {drawTools.map(([n, art]) => (
          <IconButton key={n} aria-label={n}><Ic>{art}</Ic></IconButton>
        ))}
      </ToolRow>

      <Body>
        <Side>
          <Panel $grow={1}>
            <PanelHead title="CIM View" />
            <FilterBar>
              <FilterRow>
                <PlainSelect aria-label="Filter" defaultValue="All"><option>All</option></PlainSelect>
                <IconButton as="span" $w={26}><Down w={10} c="#e0e0e0" /></IconButton>
              </FilterRow>
            </FilterBar>
            <ColumnHead $h={21}><HeadItem>Item</HeadItem><HeadStatus>Status</HeadStatus><HeadEnd /></ColumnHead>
            <Tree>
              <TreeRow $depth={0} $warn><Twist $w={28} />CIM mode</TreeRow>
              {rows.map((r) => (
                <TreeRow key={r.t} $depth={r.d} $bg={r.bg}>
                  <Twist $w={20}>{r.open && <Open />}</Twist>
                  <TreeIcon>{r.i}</TreeIcon>
                  {r.t}
                </TreeRow>
              ))}
            </Tree>
          </Panel>
          <Panel $grow={1} $line>
            <PanelHead title="Object" />
            <ColumnHead>Item</ColumnHead>
            <Tree>
              <TreeRow $depth={0}>
                <Twist $w={8} />
                <TreeIcon>
                  <Ic s={16} c="#999"><path d="M1 1h7v13H1z" strokeDasharray="2 1" strokeWidth="1" /><path d="M3 3h3v3H3zM3 9h3v3H3zM11 4h2v2h-2zM11 10h2v2h-2z" fill="#ccc" stroke="none" /></Ic>
                </TreeIcon>
                Grouping
              </TreeRow>
            </Tree>
          </Panel>
        </Side>

        <Center>
          <TabStrip>
            <FileTab>
              <FileName>Base</FileName>
              <IconButton $w={26} $h={20} aria-label="Close Base"><Cross s={12} c="#c8c8c8" /></IconButton>
            </FileTab>
            <AddTab $w={20} $h={21} aria-label="New tab"><Ic s={12} c="#d8d8d8"><path d="M6 0v12M0 6h12" strokeWidth="2" /></Ic></AddTab>
            <Spacer />
            <IconButton $w={14} $h={20} aria-label="Tab list"><Down w={12} c="#f4f4f4" /></IconButton>
          </TabStrip>
          <Canvas>
            <Model />
            <Crumb>CIM Mode &gt; BASE &gt; Base</Crumb>
            <Console>
              <Log>
                <LogLine>Set coordinate point: *Cancel*</LogLine>
                <LogLine>{"Command:  _COORDINATEANNOTATION"}</LogLine>
                <LogLine>Set coordinate point:</LogLine>
              </Log>
              <Prompt>
                <PromptSide>
                  <Ic s={5} c="#999"><path d="M1 0v5M4 0v5" strokeWidth="1" strokeDasharray="1 1" /></Ic>
                  <Ic s={11} c="#e8e8e8"><path d="M0 1h11M0 5h11M0 9h11" strokeWidth="2" /></Ic>
                </PromptSide>
                <PromptIcon>
                  <Ic s={16}><rect width="16" height="16" rx="2" fill="#c8c8c8" stroke="none" /><path d="M3 5l4 3-4 4M8 12h5" stroke="#222" /></Ic>
                </PromptIcon>
                <PromptInput aria-label="Command" defaultValue="Select BASE Point." />
              </Prompt>
            </Console>
            <Readout>
              <Coords>259.8345, -4.3375, 0.0000</Coords>
              <GridToggle $w={30} $h={30} aria-label="Grid">
                <svg width="18" height="18" viewBox="0 0 18 18" fill="#ececec" aria-hidden="true">
                  <rect width="8" height="8" rx="1" /><rect x="10" width="8" height="8" rx="1" /><rect y="10" width="8" height="8" rx="1" /><rect x="10" y="10" width="8" height="8" rx="1" />
                </svg>
              </GridToggle>
            </Readout>
          </Canvas>
          <SheetBar>
            <SheetNav $w={19} $h={20} aria-label="First"><Ic s={10}><path d="M1 0v10" /><path d="M9 0v10L3 5z" fill={ink} stroke="none" /></Ic></SheetNav>
            <SheetNav $w={19} $h={20} aria-label="Previous"><Ic s={10}><path d="M8 0v10L2 5z" fill={ink} stroke="none" /></Ic></SheetNav>
            <SheetNav $w={19} $h={20} aria-label="Next"><Ic s={10}><path d="M2 0v10l6-5z" fill={ink} stroke="none" /></Ic></SheetNav>
            <SheetNav $w={19} $h={20} aria-label="Last"><Ic s={10}><path d="M9 0v10" /><path d="M1 0v10l6-5z" fill={ink} stroke="none" /></Ic></SheetNav>
            <Sheet $on>Model</Sheet>
            <Sheet>Layout1</Sheet>
            <SheetHandle />
          </SheetBar>
          <Foot />
        </Center>

        <Side $right>
          <Panel $grow={24}>
            <PanelHead title="CAD View" inset />
            <ColumnHead $inset $h={25}>Item</ColumnHead>
            <Tree $pad={4}>
              <TreeRow $depth={0} $warn><Twist $w={8} /><TreeIcon><Sheets /></TreeIcon>CIM mode</TreeRow>
              <TreeRow $depth={0}>
                <Twist $w={20}><Open /></Twist>
                <TreeIcon><Sheets t /></TreeIcon>
                CAD
                <TreeActions>
                  <TinyButton aria-label="Side panel"><Ic s={12} c="#ddd"><path d="M.5 2.500h11v8H.5zM7.500 2v9M9 4.500h2M9 6.500h2M9 8.500h2" strokeWidth="1" /></Ic></TinyButton>
                  <TinyButton aria-label="Window"><Ic s={12} c="#1e90f0"><path d="M.5 1.500h11v9H.5z" strokeWidth="1" /><path d="M0 1h12v3H0z" fill="#1e90f0" stroke="none" /></Ic></TinyButton>
                </TreeActions>
              </TreeRow>
              <TreeRow $depth={1} $bg="#242625">
                <Twist $w={20}><Ic s={8}><path d="M1 0v8l5-4z" fill={ink} stroke="none" /></Ic></Twist>
                <TreeIcon><FolderI /></TreeIcon>
                cDrawing1
              </TreeRow>
            </Tree>
          </Panel>
          <Panel $grow={25} $line>
            <PanelHead title="Properties" inset />
            <FilterBar>
              <FilterRow $inset>
                <PlainSelect aria-label="Selection" defaultValue="n"><option value="n">No selected item.</option></PlainSelect>
                <IconButton as="span" $w={26}><Down w={10} c="#e0e0e0" /></IconButton>
              </FilterRow>
              <IconButton $w={25} aria-label="Quick select"><Ic s={16}><path d="M.5.500h15v15H.5z" strokeWidth="1" strokeDasharray="1 1" /><path d="M3 3h4v4H3z" fill={ink} strokeWidth="1" /><path d="M9.500 3.500h3v3h-3zM3.500 9.500h3v3h-3zM9.500 9.500h3v3h-3z" strokeWidth="1" /></Ic></IconButton>
              <IconButton $w={25} aria-label="Add to selection"><Ic s={16}><path d="M.5.500h15v15H.5z" strokeWidth="1" strokeDasharray="1 1" /><path d="M8 4v8M4 8h8" strokeWidth="3" /></Ic></IconButton>
              <IconButton $w={25} aria-label="Select objects"><Ic s={16}><path d="M.5.500h15v15H.5z" strokeWidth="1" strokeDasharray="1 1" /><path d="M6 3l6 6H9l1 4H8l-1-4-1 1z" fill={ink} stroke="none" /></Ic></IconButton>
              <IconButton $w={17} aria-label="Toggle pick"><Ic s={16}><path d="M2 5l7 6-4 1-3 4zM14 0L5 5l5 1-4 5 10-7-5-1z" fill={ink} stroke="none" /></Ic></IconButton>
            </FilterBar>
            <PropBody>
              <PropScroll>
                <PropTable>
                  <colgroup><col style={{ width: 25 }} /><col style={{ width: 123 }} /><col /></colgroup>
                  <PropRows title="General" items={general} />
                  <PropRows title="View" items={view} dim />
                  <PropRows title="Misc" items={[["Viewport scale", "1:1"]]} />
                </PropTable>
              </PropScroll>
              <ScrollTrack>
                <svg width="12" height="6" viewBox="0 0 12 6" aria-hidden="true"><path d="M0 6h12L6 0z" fill="#000" /></svg>
                <svg width="12" height="6" viewBox="0 0 12 6" aria-hidden="true"><path d="M0 0h12L6 6z" fill="#000" /></svg>
              </ScrollTrack>
            </PropBody>
            <Foot />
          </Panel>
        </Side>
      </Body>
    </Shell>
  );
}
